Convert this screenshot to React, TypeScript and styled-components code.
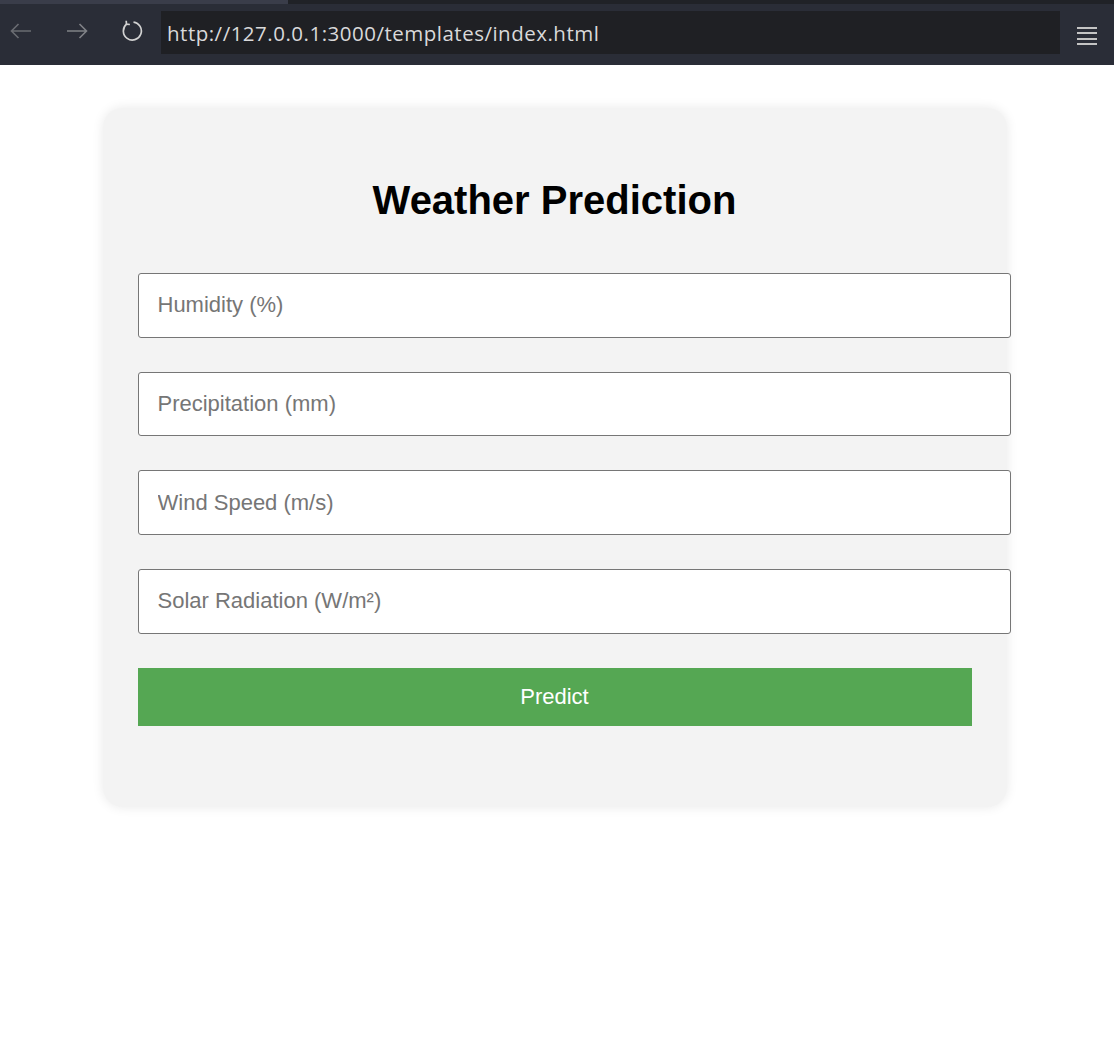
import React from 'react';
import styled, { createGlobalStyle } from 'styled-components';

const GlobalStyle = createGlobalStyle`
    html, body {
        margin: 0;
        padding: 0;
        background: #ffffff;
        font-family: "Liberation Sans", Arial, sans-serif;
    }
    * {
        box-sizing: border-box;
    }
`;

// browser chrome
const Chrome = styled.header`
    display: flex;
    flex-direction: column;
    background: #2a2d37;
`;

const TabStrip = styled.div`
    display: flex;
    height: 4px;
    background: #202227;
`;

const ActiveTab = styled.div`
    width: 288px;
    background: #3a3d4a;
`;

const Toolbar = styled.div`
    display: flex;
    align-items: flex-start;
    height: 61px;
    padding-top: 7px;
`;

const NavButton = styled.button<{ $color: string; $offset: number }>`
    display: flex;
    align-items: center;
    justify-content: center;
    width: 22px;
    height: 40px;
    margin-left: ${(p) => p.$offset}px;
    padding: 0;
    border: none;
    background: transparent;
    color: ${(p) => p.$color};
`;

const UrlBar = styled.div`
    flex: 1;
    display: flex;
    align-items: center;
    height: 43px;
    margin-left: 18px;
    padding-left: 6px;
    background: #1f2024;
    color: #d9d9da;
    font-family: "Open Sans", "Liberation Sans", sans-serif;
    font-size: 20.5px;
    letter-spacing: 0.5px;
`;

const MenuButton = styled.div`
    display: flex;
    flex-direction: column;
    gap: 3.3px;
    width: 20px;
    margin: 16px 17px 0 17px;

    span {
        display: block;
        height: 2px;
        background: #c4c4c4;
    }
`;

// page
const Page = styled.main`
    display: flex;
    justify-content: center;
    padding: 43px 5px 60px 0;
`;

const Card = styled.section`
    width: 904px;
    padding: 35px 35px 81px;
    background: #f3f3f3;
    border-radius: 20px;
    box-shadow: 0 0 12px rgba(0, 0, 0, 0.09);
`;

const Title = styled.h1`
    margin: 35px 0 50px;
    text-align: center;
    font-size: 40px;
    font-weight: bold;
    color: #000000;
`;

const Form = styled.form`
    display: flex;
    flex-direction: column;
    gap: 34px;
`;

const Field = styled.input`
    width: calc(100% + 39px);
    height: 64.67px;
    padding: 0 19px;
    border: 1px solid #767676;
    border-radius: 3px;
    background: #ffffff;
    font-family: "Liberation Sans", Arial, sans-serif;
    font-size: 22px;
    color: #222;

    &::placeholder {
        color: #767676;
    }
`;

const PredictButton = styled.button`
    width: 100%;
    height: 58.67px;
    border: none;
    background: #55a753;
    color: #ffffff;
    font-family: "Liberation Sans", Arial, sans-serif;
    font-size: 22px;
`;

const Arrow = ({ flip }: { flip?: boolean }) => (
    <svg width="22" height="16" viewBox="0 0 22 16" fill="none" stroke="currentColor" strokeWidth="1.6"
        style={flip ? { transform: 'scaleX(-1)' } : undefined}>
        <path d="M21 8H1.5M8.5 1L1.5 8l7 7" />
    </svg>
);

const Reload = () => (
    <svg width="22" height="22" viewBox="0 0 22 22" fill="none" stroke="currentColor" strokeWidth="1.7">
        <path d="M5.5 4.2A9 9 0 1 0 12.5 2.1" />
        <path d="M5.2 0.8L5.5 4.2L8.9 4.5" />
    </svg>
);

const fields = ['Humidity (%)', 'Precipitation (mm)', 'Wind Speed (m/s)', 'Solar Radiation (W/m²)'];

const App = () => {
    return (
        <>
            <GlobalStyle />
            <Chrome>
                <TabStrip>
                    <ActiveTab />
                </TabStrip>
                <Toolbar>
                    <NavButton $color="#6a6c72" $offset={10}><Arrow /></NavButton>
                    <NavButton $color="#808287" $offset={34}><Arrow flip /></NavButton>
                    <NavButton $color="#d2d2d2" $offset={33}><Reload /></NavButton>
                    <UrlBar>http://127.0.0.1:3000/templates/index.html</UrlBar>
                    <MenuButton>
                        <span /><span /><span /><span />
                    </MenuButton>
                </Toolbar>
            </Chrome>
            <Page>
                <Card>
                    <Title>Weather Prediction</Title>
                    <Form onSubmit={(e) => e.preventDefault()}>
                        {fields.map((f) => (
                            <Field key={f} type="text" placeholder={f} />
                        ))}
                        <PredictButton type="submit">Predict</PredictButton>
                    </Form>
                </Card>
            </Page>
        </>
    );
};

export default App;
